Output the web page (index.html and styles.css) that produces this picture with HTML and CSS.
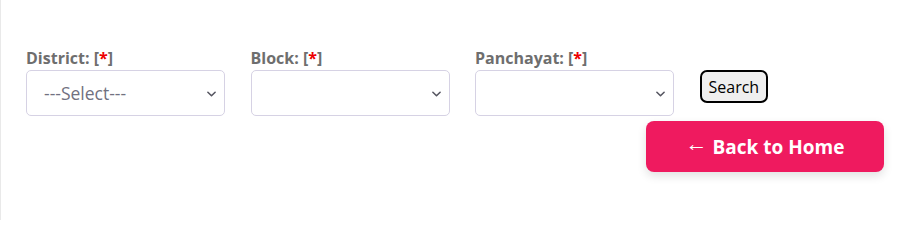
FILE: index.html
```html
<!DOCTYPE html>
<html>
<head>
<meta charset="utf-8">
<link rel="stylesheet" href="styles.css">
</head>
<body>
<div class="page">
  <div class="filters">
    <div class="field">
      <label class="lbl">District: [<span class="req">*</span>]</label>
      <div class="select"><span class="ph">---Select---</span><svg class="chev" viewBox="0 0 10 6" width="9" height="6"><path d="M1 1 L5 5 L9 1" fill="none" stroke="#555560" stroke-width="1.7" stroke-linecap="round" stroke-linejoin="round"/></svg></div>
    </div>
    <div class="field">
      <label class="lbl">Block: [<span class="req">*</span>]</label>
      <div class="select"><span class="ph"></span><svg class="chev" viewBox="0 0 10 6" width="9" height="6"><path d="M1 1 L5 5 L9 1" fill="none" stroke="#555560" stroke-width="1.7" stroke-linecap="round" stroke-linejoin="round"/></svg></div>
    </div>
    <div class="field">
      <label class="lbl">Panchayat: [<span class="req">*</span>]</label>
      <div class="select"><span class="ph"></span><svg class="chev" viewBox="0 0 10 6" width="9" height="6"><path d="M1 1 L5 5 L9 1" fill="none" stroke="#555560" stroke-width="1.7" stroke-linecap="round" stroke-linejoin="round"/></svg></div>
    </div>
    <button class="search">Search</button>
  </div>
  <div class="actions">
    <a class="back"><span class="arrow">←</span> Back to Home</a>
  </div>
</div>
</body>
</html>
```
FILE: styles.css
```css
html, body {
  margin: 0;
  padding: 0;
  background: #fff;
  font-family: "Open Sans", "Noto Sans", sans-serif;
}
.page {
  border-left: 1px solid #e9e9e9;
  height: 220px;
  box-sizing: border-box;
  padding: 47px 40px 0 25px;
}
.filters {
  display: flex;
  align-items: flex-start;
  gap: 25.5px;
}
.field {
  display: flex;
  flex-direction: column;
  width: 199px;
}
.lbl {
  font-size: 16px;
  font-weight: 700;
  color: #6e6e6e;
  line-height: 22px;
  height: 22px;
}
.req { color: #e00; }
.select {
  margin-top: 1px;
  height: 46px;
  box-sizing: border-box;
  border: 1px solid #d6d2e4;
  border-radius: 5px;
  display: flex;
  align-items: center;
  justify-content: space-between;
  padding: 0 8px 0 17px;
}
.ph {
  font-size: 17.5px;
  color: #717180;
}
.chev { margin-top: 1px; }
.search {
  margin-top: 23px;
  height: 33px;
  padding: 0 7px;
  border: 2px solid #000;
  border-radius: 7px;
  background: #efefef;
  font-family: "Open Sans", sans-serif;
  font-size: 16px;
  color: #000;
}
.actions {
  display: flex;
  justify-content: flex-end;
  margin-top: 5px;
}
.back {
  display: inline-flex;
  align-items: center;
  justify-content: center;
  width: 238px;
  height: 51px;
  background: #ef1a5f;
  color: #fff;
  border-radius: 8px;
  font-size: 19px;
  font-weight: 700;
  box-shadow: 0 4px 10px rgba(0,0,0,0.12);
  text-decoration: none;
  white-space: pre;
}
.arrow {
  font-size: 22px;
  font-weight: 400;
  line-height: 1;
  margin-bottom: 9px;
}
```
